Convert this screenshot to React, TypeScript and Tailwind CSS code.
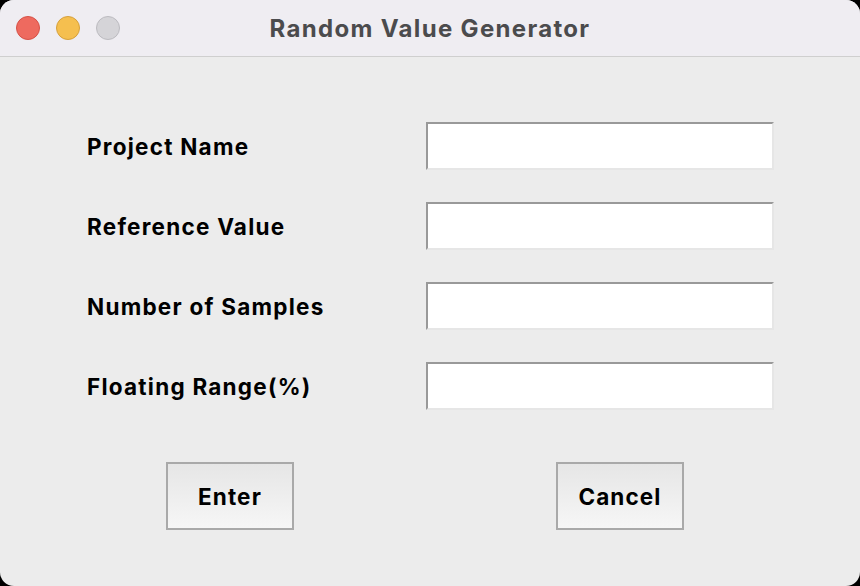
import React from "react";

const labels = ["Project Name", "Reference Value", "Number of Samples", "Floating Range(%)"];

export default function App() {
  return (
    <div className="w-[860px] h-[586px] bg-black" style={{ fontFamily: "Inter, 'Liberation Sans', sans-serif" }}>
      <div className="w-full h-full rounded-[14px] overflow-hidden flex flex-col bg-[#ececec]">
        <div className="h-[57px] shrink-0 bg-[#efedf2] border-b border-[#cfcfcf] relative flex items-center">
          <div className="flex gap-[16px] pl-[16px]">
            <div className="w-[24px] h-[24px] rounded-full bg-[#ee6a5f] border border-[#d65147]" />
            <div className="w-[24px] h-[24px] rounded-full bg-[#f5bf4f] border border-[#d6a03c]" />
            <div className="w-[24px] h-[24px] rounded-full bg-[#d5d4d8] border border-[#bcbbc0]" />
          </div>
          <div className="absolute inset-0 flex items-center justify-center pt-[1px] text-[24px] font-bold tracking-[0.055em] text-[#4b4b4d]">
            Random Value Generator
          </div>
        </div>
        <div className="flex flex-col pt-[65px] pl-[87px]">
          <div className="flex flex-col gap-[32px]">
            {labels.map((l) => (
              <div key={l} className="flex items-center h-[48px]">
                <div className="w-[339px] pt-[2px] text-[22.5px] font-bold tracking-[0.055em] text-black">{l}</div>
                <div className="w-[348px] h-[48px] bg-white border-t-2 border-l-2 border-t-[#999] border-l-[#999] border-r-2 border-b-2 border-r-[#e6e6e6] border-b-[#e6e6e6]" />
              </div>
            ))}
          </div>
          <div className="flex pt-[52px] pl-[79px] gap-[262px]">
            {["Enter", "Cancel"].map((b) => (
              <div
                key={b}
                className="w-[128px] h-[68px] border-2 border-[#a9a9a9] bg-gradient-to-b from-[#e6e6e6] to-[#f6f6f6] flex items-center justify-center pt-[2px] text-[22.5px] font-bold tracking-[0.05em] text-black"
              >
                {b}
              </div>
            ))}
          </div>
        </div>
      </div>
    </div>
  );
}
